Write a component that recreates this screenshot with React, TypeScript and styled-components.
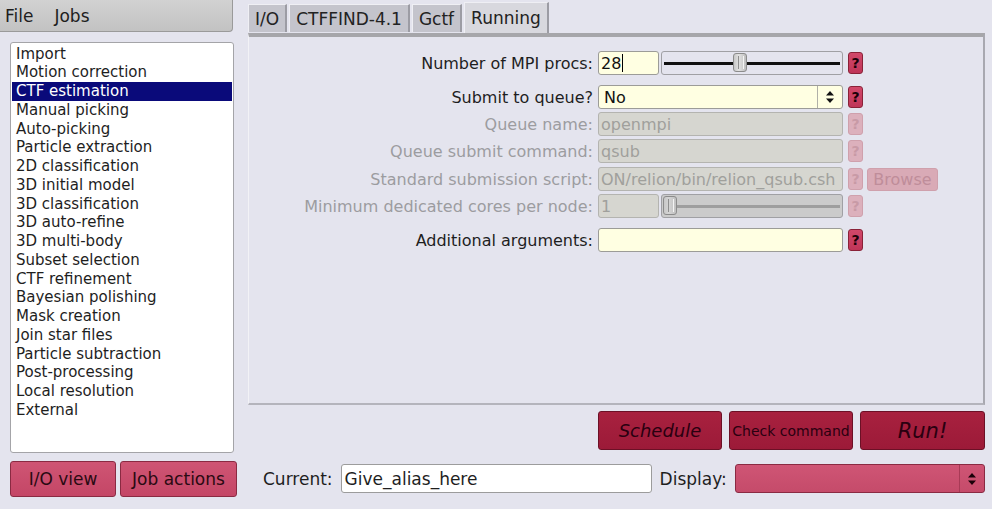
import React from 'react';
import styled, { createGlobalStyle } from 'styled-components';

const GlobalStyle = createGlobalStyle`
  html, body {
    margin: 0;
    padding: 0;
    background: #e4e4ee;
  }
  body {
    font-family: "DejaVu Sans", "Liberation Sans", sans-serif;
    color: #1e1e1e;
  }
`;

const Window = styled.div`
  width: 992px;
  height: 509px;
  display: flex;
  background: #e4e4ee;
  overflow: hidden;
`;

const LeftColumn = styled.div`
  width: 248px;
  display: flex;
  flex-direction: column;
`;

const MenuBar = styled.div`
  width: 233px;
  height: 32px;
  box-sizing: border-box;
  display: flex;
  align-items: center;
  gap: 21px;
  padding-left: 5px;
  background: linear-gradient(#d2d2d2, #c2c2c2);
  border-right: 1px solid #9a9a9a;
  border-bottom: 1px solid #9a9a9a;
  border-bottom-right-radius: 4px;
  font-size: 17px;
`;

const JobList = styled.div`
  margin: 10px 0 0 10px;
  width: 224px;
  height: 411px;
  box-sizing: border-box;
  background: #fff;
  border: 1px solid #a4a4a8;
  border-radius: 3px;
  padding: 1.5px 1px;
  font-size: 15px;
`;

const JobItem = styled.div<{ $selected?: boolean }>`
  height: 18.75px;
  line-height: 18.75px;
  padding-left: 4px;
  white-space: nowrap;
  background: ${p => (p.$selected ? '#0a0a7a' : 'transparent')};
  color: ${p => (p.$selected ? '#ffffff' : '#1e1e1e')};
`;

const LeftButtons = styled.div`
  display: flex;
  gap: 4px;
  margin: 8px 0 0 10px;
`;

const PinkButton = styled.button<{ $w: number }>`
  width: ${p => p.$w}px;
  height: 36px;
  background: linear-gradient(#cf5574, #c44666);
  border: 1px solid #8a2a42;
  border-radius: 3px;
  font-family: inherit;
  font-size: 17px;
  color: #2a0a12;
  padding: 0;
`;

const RightColumn = styled.div`
  width: 738px;
  display: flex;
  flex-direction: column;
`;

const TabBar = styled.div`
  display: flex;
  align-items: flex-end;
  gap: 2px;
  height: 33px;
`;

const Tab = styled.div<{ $active?: boolean }>`
  height: ${p => (p.$active ? 31 : 28)}px;
  box-sizing: border-box;
  padding: 0 6px;
  display: flex;
  align-items: center;
  font-size: 17px;
  color: #222;
  background: ${p => (p.$active ? '#d8d8de' : '#c4c4cc')};
  border-left: 1px solid #efeff4;
  border-top: 1px solid #efeff4;
  border-right: 2px solid #9c9ca4;
  margin-bottom: ${p => (p.$active ? 0 : 1)}px;
`;

const Panel = styled.div`
  width: 737px;
  height: 372px;
  box-sizing: border-box;
  border-top: 4px solid #a6a6aa;
  border-left: 1px solid #f2f2f6;
  border-right: 2px solid #a8a8b0;
  border-bottom: 2px solid #b4b4bc;
  padding-top: 14px;
`;

const Row = styled.div<{ $gap: number }>`
  display: flex;
  align-items: center;
  height: 24px;
  margin-bottom: ${p => p.$gap}px;
`;

const Label = styled.div<{ $disabled?: boolean }>`
  width: 349px;
  box-sizing: border-box;
  padding-right: 5px;
  text-align: right;
  font-size: 16px;
  white-space: nowrap;
  color: ${p => (p.$disabled ? '#9c9ca0' : '#1e1e1e')};
`;

const Field = styled.div<{ $w: number; $disabled?: boolean }>`
  width: ${p => p.$w}px;
  height: 24px;
  box-sizing: border-box;
  border: 1px solid ${p => (p.$disabled ? '#b4b4b0' : '#9c9c98')};
  border-radius: 3px;
  background: ${p => (p.$disabled ? '#d6d6d0' : '#ffffe2')};
  color: ${p => (p.$disabled ? '#a0a09c' : '#111')};
  font-size: 16px;
  padding-left: 2px;
  display: flex;
  align-items: center;
  white-space: nowrap;
  overflow: hidden;
  position: relative;
`;

const Caret = styled.span`
  display: inline-block;
  width: 1px;
  height: 18px;
  background: #000;
  margin-left: 1px;
`;

const Slider = styled.div<{ $disabled?: boolean }>`
  width: 182px;
  height: 24px;
  margin-left: 2px;
  box-sizing: border-box;
  border: 1px solid #a0a0a4;
  border-radius: 3px;
  background: ${p => (p.$disabled ? '#cbcbcb' : '#e4e4ee')};
  position: relative;
  display: flex;
  align-items: center;
  padding: 0 2px;
`;

const Track = styled.div<{ $disabled?: boolean }>`
  flex: 1;
  height: 3px;
  background: ${p => (p.$disabled ? '#9e9e9e' : '#111')};
`;

const Thumb = styled.div<{ $disabled?: boolean }>`
  position: absolute;
  top: 1px;
  width: 14px;
  height: 19px;
  box-sizing: border-box;
  border: 1px solid #8c8c8c;
  border-radius: 3px;
  background: ${p =>
    p.$disabled
      ? 'linear-gradient(90deg, #c8c8c8, #d4d4d4 40%, #c0c0c0)'
      : 'linear-gradient(90deg, #c8c8c8, #e2e2e2 40%, #bdbdbd)'};
  &::after {
    content: '';
    position: absolute;
    left: 4px;
    top: 2px;
    width: 4px;
    height: 13px;
    border-left: 1px solid #8e8e8e;
    border-right: 1px solid #f4f4f4;
  }
`;

const ArrowBox = styled.div<{ $line: string }>`
  position: absolute;
  right: 0;
  top: 0;
  bottom: 0;
  width: 24px;
  border-left: 1px solid ${p => p.$line};
  display: flex;
  align-items: center;
  justify-content: center;
`;

const HelpButton = styled.div<{ $disabled?: boolean }>`
  width: 15px;
  height: 22px;
  margin-left: 5px;
  box-sizing: border-box;
  border-radius: 3px;
  border: 1px solid ${p => (p.$disabled ? '#cfa0ac' : '#8a2238')};
  background: ${p => (p.$disabled ? '#dcb0bc' : 'linear-gradient(#d2486a, #bf3558)')};
  color: ${p => (p.$disabled ? '#c89aa6' : '#1a0008')};
  font-size: 14px;
  font-weight: bold;
  display: flex;
  align-items: center;
  justify-content: center;
`;

const BrowseButton = styled.div`
  width: 71px;
  height: 23px;
  margin-left: 4px;
  box-sizing: border-box;
  border: 1px solid #cfa0ac;
  border-radius: 3px;
  background: #d9aab6;
  color: #bf8d9a;
  font-size: 16px;
  display: flex;
  align-items: center;
  justify-content: center;
`;

const ActionRow = styled.div`
  display: flex;
  justify-content: flex-end;
  gap: 7px;
  padding-right: 1px;
  margin-top: 6px;
`;

const RedButton = styled.button<{ $w: number; $size: number; $italic?: boolean }>`
  width: ${p => p.$w}px;
  height: 39px;
  background: linear-gradient(#a8213f, #9c1a38);
  border: 1px solid #6c1026;
  border-radius: 3px;
  font-family: inherit;
  font-size: ${p => p.$size}px;
  font-style: ${p => (p.$italic ? 'italic' : 'normal')};
  color: #2a0010;
  padding: 0;
`;

const BottomRow = styled.div`
  display: flex;
  align-items: center;
  margin-top: 14px;
  padding-left: 15px;
  font-size: 17px;
`;

const AliasInput = styled.div`
  width: 311px;
  height: 29px;
  margin-left: 8px;
  box-sizing: border-box;
  border: 1px solid #9c9c9c;
  border-radius: 3px;
  background: #fff;
  display: flex;
  align-items: center;
  padding-left: 3px;
  font-size: 17px;
`;

const DisplayLabel = styled.span`
  margin-left: 8px;
`;

const DisplaySelect = styled.div`
  width: 250px;
  height: 29px;
  margin-left: 8px;
  box-sizing: border-box;
  border: 1px solid #8a2a42;
  border-radius: 3px;
  background: linear-gradient(#cf5575, #c54b6a);
  position: relative;
`;

const UpDown = ({ color }: { color: string }) => (
  <svg width="10" height="14" viewBox="0 0 10 14">
    <polygon points="5,1 9,5.5 1,5.5" fill={color} />
    <polygon points="1,8.5 9,8.5 5,13" fill={color} />
  </svg>
);

const jobs = [
  'Import',
  'Motion correction',
  'CTF estimation',
  'Manual picking',
  'Auto-picking',
  'Particle extraction',
  '2D classification',
  '3D initial model',
  '3D classification',
  '3D auto-refine',
  '3D multi-body',
  'Subset selection',
  'CTF refinement',
  'Bayesian polishing',
  'Mask creation',
  'Join star files',
  'Particle subtraction',
  'Post-processing',
  'Local resolution',
  'External',
];

export default function App() {
  return (
    <Window>
      <GlobalStyle />
      <LeftColumn>
        <MenuBar>
          <span>File</span>
          <span>Jobs</span>
        </MenuBar>
        <JobList>
          {jobs.map(job => (
            <JobItem key={job} $selected={job === 'CTF estimation'}>
              {job}
            </JobItem>
          ))}
        </JobList>
        <LeftButtons>
          <PinkButton $w={106}>I/O view</PinkButton>
          <PinkButton $w={117}>Job actions</PinkButton>
        </LeftButtons>
      </LeftColumn>

      <RightColumn>
        <TabBar>
          <Tab>I/O</Tab>
          <Tab>CTFFIND-4.1</Tab>
          <Tab>Gctf</Tab>
          <Tab $active>Running</Tab>
        </TabBar>
        <Panel>
          <Row $gap={10}>
            <Label>Number of MPI procs:</Label>
            <Field $w={61}>
              28
              <Caret />
            </Field>
            <Slider>
              <Track />
              <Thumb style={{ left: 71 }} />
            </Slider>
            <HelpButton>?</HelpButton>
          </Row>
          <Row $gap={3}>
            <Label>Submit to queue?</Label>
            <Field $w={245}>
              <span style={{ paddingLeft: 3 }}>No</span>
              <ArrowBox $line="#b0b0a8">
                <UpDown color="#111" />
              </ArrowBox>
            </Field>
            <HelpButton>?</HelpButton>
          </Row>
          <Row $gap={3}>
            <Label $disabled>Queue name:</Label>
            <Field $w={245} $disabled>
              openmpi
            </Field>
            <HelpButton $disabled>?</HelpButton>
          </Row>
          <Row $gap={4}>
            <Label $disabled>Queue submit command:</Label>
            <Field $w={245} $disabled>
              qsub
            </Field>
            <HelpButton $disabled>?</HelpButton>
          </Row>
          <Row $gap={3}>
            <Label $disabled>Standard submission script:</Label>
            <Field $w={245} $disabled>
              ON/relion/bin/relion_qsub.csh
            </Field>
            <HelpButton $disabled>?</HelpButton>
            <BrowseButton>Browse</BrowseButton>
          </Row>
          <Row $gap={10}>
            <Label $disabled>Minimum dedicated cores per node:</Label>
            <Field $w={61} $disabled>
              1
            </Field>
            <Slider $disabled>
              <Track $disabled />
              <Thumb $disabled style={{ left: 1 }} />
            </Slider>
            <HelpButton $disabled>?</HelpButton>
          </Row>
          <Row $gap={0}>
            <Label>Additional arguments:</Label>
            <Field $w={245} />
            <HelpButton>?</HelpButton>
          </Row>
        </Panel>

        <ActionRow>
          <RedButton $w={124} $size={18} $italic>
            Schedule
          </RedButton>
          <RedButton $w={124} $size={14}>
            Check command
          </RedButton>
          <RedButton $w={125} $size={21} $italic>
            Run!
          </RedButton>
        </ActionRow>

        <BottomRow>
          <span>Current:</span>
          <AliasInput>Give_alias_here</AliasInput>
          <DisplayLabel>Display:</DisplayLabel>
          <DisplaySelect>
            <ArrowBox $line="#a83a56">
              <UpDown color="#1a0008" />
            </ArrowBox>
          </DisplaySelect>
        </BottomRow>
      </RightColumn>
    </Window>
  );
}
